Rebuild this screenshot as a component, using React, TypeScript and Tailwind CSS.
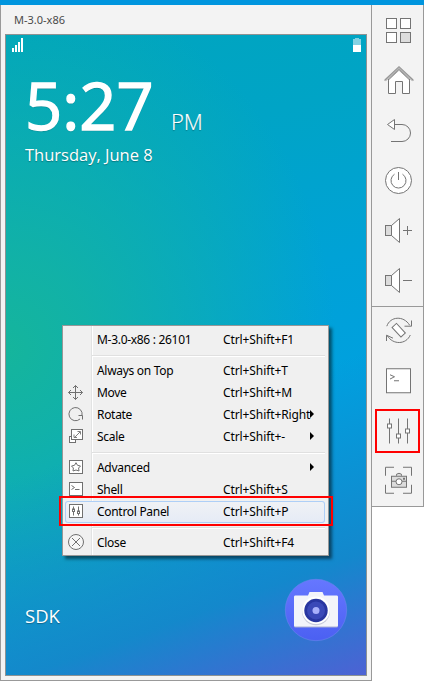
import type { ReactNode } from "react";

type MenuRow = {
  label: string;
  keys?: string;
  icon?: ReactNode;
  arrow?: boolean;
  active?: boolean;
};

function Tool({ box, children }: { box: string; children: ReactNode }) {
  return (
    <svg viewBox={box} className="w-full min-h-0 flex-1" fill="none" stroke="#747474">
      {children}
    </svg>
  );
}

function Speaker() {
  return (
    <>
      <rect x="385.5" y="225.5" width="6" height="10" fill="#dcdcdc" />
      <path d="M391.5 225.5L399.5 218.5V242.5L391.5 235.5Z" fill="#fff" />
    </>
  );
}

function Toolbar() {
  return (
    <aside className="flex h-[502px] w-[53px] flex-col border-x border-b border-[#999] bg-[#f3f3f3]">
      <div className="flex h-[301px] flex-col border-b border-transparent">
        <Tool box="372 5 51 50">
          <rect x="386.5" y="18.5" width="10" height="10" fill="#fff" />
          <rect x="400.5" y="18.5" width="10" height="10" fill="#fff" />
          <rect x="386.5" y="32.5" width="10" height="10" fill="#fff" />
          <rect x="400.5" y="32.5" width="10" height="10" fill="#dcdcdc" />
        </Tool>
        <Tool box="372 55 51 50">
          <path d="M388.5 79V93.5H395.5V81.5H402.5V93.5H409.5V79L399 69Z" fill="#fff" />
          <path d="M385 80.3L399 67.7L413 80.3" stroke="#b4b4b4" strokeWidth="2.4" />
          <path d="M384.5 80.5L399 66.7L413.5 80.5M388 80.5L399 70.2L410 80.5" stroke="#8a8a8a" strokeWidth=".8" />
        </Tool>
        <Tool box="372 105 51 50">
          <path d="M394.5 124.5H402A8.5 8.5 0 0 1 402 141.5H391" />
          <path d="M387.5 124.5L394.5 119.5V129.5Z" fill="#fff" />
        </Tool>
        <Tool box="372 155 51 50">
          <circle cx="398.5" cy="180.5" r="13" fill="#fff" />
          <path d="M394.5 174.2A7.5 7.5 0 1 0 402.5 174.2M398.5 172V180" />
        </Tool>
        <Tool box="372 205 51 50">
          <Speaker />
          <path d="M403 230.5H412M407.5 226V235" />
        </Tool>
        <Tool box="372 255 51 50">
          <g transform="translate(0 50)">
            <Speaker />
            <path d="M403 230.5H412" />
          </g>
        </Tool>
      </div>
      <div className="flex h-[200px] flex-col border-t border-[#999]">
        <Tool box="372 307 51 49.75">
          <rect x="-3" y="-6.5" width="6" height="13" fill="#fff" transform="translate(398.7 330.2) rotate(-43)" />
          <path d="M386.8 326.2C390 316.5 403.5 315 409.7 325.3M411.5 320.5V326.2H404.5M410.3 335C406 344.8 393 345 387.3 335.7M386.5 341V335.2L393 338.2" />
        </Tool>
        <Tool box="372 356.75 51 49.75">
          <rect x="386.5" y="368.5" width="24" height="24" fill="#fff" />
          <path d="M390 374.5L394.5 376.5L390 378.8M394 380.5H399" />
        </Tool>
        <Tool box="372 406.5 51 49.75">
          <path d="M389.5 418V443M398.5 418V443M407.5 418V443" />
          <g fill="#fff">
            <rect x="387.5" y="423.5" width="4" height="4" />
            <rect x="396.5" y="433.5" width="4" height="4" />
            <rect x="405.5" y="428.5" width="4" height="4" />
          </g>
        </Tool>
        <Tool box="372 456.25 51 49.75">
          <path d="M385.5 476V467.5H394M403 467.5H411.5V476M411.5 485V493.5H403M394 493.5H385.5V485" />
          <path d="M396.5 476V474.5Q399 472.5 401.5 474.5V476" fill="#dcdcdc" />
          <rect x="391.5" y="476.5" width="15" height="11" fill="#dcdcdc" />
          <path d="M391.5 481.5H406.5" />
          <circle cx="399" cy="482" r="3" fill="#fff" />
          <rect x="403" y="478" width="2" height="2" fill="#747474" stroke="none" />
        </Tool>
      </div>
    </aside>
  );
}

const moveIcon = (
  <svg viewBox="65 382 26 22" className="h-[22px] w-[26px]" fill="none" stroke="#707070">
    <path d="M68.5 392.5H82.5M75.5 385.5V399.5M71 390L68.5 392.5L71 395M80 390L82.5 392.5L80 395M73 388L75.5 385.5L78 388M73 397L75.5 399.5L78 397" />
  </svg>
);
const rotateIcon = (
  <svg viewBox="65 404 26 22" className="h-[22px] w-[26px]" fill="none" stroke="#707070">
    <path d="M80 419A6.6 6.6 0 1 1 82 415.5M82.5 419.5V415.5H78.5" />
  </svg>
);
const scaleIcon = (
  <svg viewBox="65 426 26 22" className="h-[22px] w-[26px]" fill="#fff" stroke="#707070">
    <rect x="69.5" y="436.5" width="6" height="6" />
    <rect x="71.5" y="429.5" width="11" height="10" />
    <path d="M74.5 437.5L80 432M77.5 431.5H80.5V434.5M74 434.5V437.5H77" fill="none" strokeWidth=".9" />
  </svg>
);
const advancedIcon = (
  <svg viewBox="65 457 26 22" className="h-[22px] w-[26px]" fill="#fff" stroke="#707070">
    <rect x="69.5" y="460.5" width="13" height="13" />
    <path d="M76 462.7L77.5 465.3L80.5 466L78.6 468L79 471L76 470L73 471L73.4 468L71.5 466L74.5 465.3Z" />
  </svg>
);
const shellIcon = (
  <svg viewBox="65 479 26 22" className="h-[22px] w-[26px]" fill="#fff" stroke="#707070">
    <rect x="69.5" y="482.5" width="13" height="13" />
    <path d="M71.5 485.5L74.5 487.5L71.5 489.5M75 489.5H79.5" fill="none" />
  </svg>
);
const panelIcon = (
  <svg viewBox="65 501 26 22" className="h-[22px] w-[26px]" fill="#fff" stroke="#707070">
    <rect x="69.5" y="504.5" width="13" height="13" />
    <path d="M73.5 506.5V515.5M78.5 506.5V515.5" />
    <rect x="72.5" y="509" width="2" height="2.5" />
    <rect x="77.5" y="511" width="2" height="2.5" />
  </svg>
);
const closeIcon = (
  <svg viewBox="65 532 26 22" className="h-[22px] w-[26px]" fill="none" stroke="#707070">
    <circle cx="76" cy="542" r="7.5" fill="#f6f6f6" />
    <path d="M72 538L80 546M80 538L72 546" />
  </svg>
);

const groups: MenuRow[][] = [
  [{ label: "M-3.0-x86 : 26101", keys: "Ctrl+Shift+F1" }],
  [
    { label: "Always on Top", keys: "Ctrl+Shift+T" },
    { label: "Move", keys: "Ctrl+Shift+M", icon: moveIcon },
    { label: "Rotate", keys: "Ctrl+Shift+Right", icon: rotateIcon, arrow: true },
    { label: "Scale", keys: "Ctrl+Shift+-", icon: scaleIcon, arrow: true },
  ],
  [
    { label: "Advanced", icon: advancedIcon, arrow: true },
    { label: "Shell", keys: "Ctrl+Shift+S", icon: shellIcon },
    { label: "Control Panel", keys: "Ctrl+Shift+P", icon: panelIcon, active: true },
  ],
  [{ label: "Close", keys: "Ctrl+Shift+F4", icon: closeIcon }],
];

function Row({ row }: { row: MenuRow }) {
  return (
    <div
      className={`flex h-[22px] items-center whitespace-nowrap ${
        row.active
          ? "rounded-[3px] bg-linear-to-b from-[#f0f2f5] to-[#e5ebf6] shadow-[inset_0_0_0_1px_#aecff7]"
          : ""
      }`}
    >
      <div className="w-8 shrink-0">{row.icon}</div>
      <div className="w-[126px] shrink-0 tracking-[-0.3px]">{row.label}</div>
      <div className="w-[87px] shrink-0 tracking-[-0.1px]">{row.keys}</div>
      {row.arrow && (
        <svg viewBox="0 0 4 8" className="mb-[3px] h-2 w-1 shrink-0">
          <path d="M0 0L4 4L0 8Z" />
        </svg>
      )}
    </div>
  );
}

function ContextMenu() {
  return (
    <div className="absolute left-[62px] top-[325px] h-[231px] w-[267px] border border-[#979797] bg-[#f0f0f0] bg-[linear-gradient(90deg,transparent_28px,#e2e3e3_28px,#e2e3e3_29px,#fff_29px,#fff_30px,transparent_30px)] py-[3px] pl-[2px] pr-[3px] font-['Noto_Sans','Open_Sans',sans-serif] text-[12px] leading-4 text-black shadow-[3px_3px_3px_rgba(0,0,0,0.5)]">
      {groups.map((g, i) => (
        <div key={i}>
          {i > 0 && (
            <div className="flex h-[9px] items-center pl-[27px]">
              <div className="h-[2px] w-full border-b border-white bg-[#e0e0e0]" />
            </div>
          )}
          {g.map((r) => (
            <Row key={r.label} row={r} />
          ))}
        </div>
      ))}
    </div>
  );
}

function PhoneScreen() {
  return (
    <div className="flex h-[642px] w-[362px] flex-col border border-[#8d9293] bg-[linear-gradient(160deg,transparent_58%,rgba(24,130,200,0.8)_84%,#4d62d4_100%),radial-gradient(ellipse_330px_370px_at_0%_49%,#15b59c_0%,rgba(20,180,160,0.85)_25%,transparent_100%),linear-gradient(165deg,#00a5be_0%,#00a4c6_20%,#00a2d6_42%,#00a0df_60%)] font-['Open_Sans','Noto_Sans',sans-serif] text-white">
      <div className="flex h-[22px] justify-between px-[5px] pt-[3px]">
        <svg viewBox="0 0 12 14" className="ml-[1px] h-[14px] w-3" fill="#fff">
          <path d="M0 10H2V14H0ZM3 7H5V14H3ZM6 4H8V14H6ZM9 0H11V14H9Z" />
        </svg>
        <svg viewBox="0 0 8 14" className="h-[14px] w-2">
          <path d="M0 1H2V0H6V1H8V7H0Z" fill="#84d2e3" />
          <path d="M0 7H8V14H0Z" fill="#fff" />
        </svg>
      </div>
      <div className="flex h-[80px] items-baseline pl-[19px] pt-[13px] [text-shadow:0_1px_1px_rgba(0,0,0,0.3)]">
        <span className="w-[146px] text-[65px] leading-[70px] [-webkit-text-stroke:1.4px_white]">5:27</span>
        <span className="text-[22px] font-light leading-none [-webkit-text-stroke:0.2px_white]">PM</span>
      </div>
      <div className="mt-[6px] pl-[19px] text-[16.5px] leading-6 [text-shadow:0_1px_1px_rgba(0,0,0,0.3)]">
        Thursday, June 8
      </div>
      <div className="mt-auto flex h-[97px] items-start justify-between pl-[19px] pr-[18px]">
        <span className="mt-[26px] text-[18.5px] leading-6 [text-shadow:0_1px_1px_rgba(0,0,0,0.3)]">SDK</span>
        <svg viewBox="0 0 64 64" className="h-16 w-16">
          <defs>
            <linearGradient id="disc" x2="0" y2="1">
              <stop stopColor="#6677ff" />
              <stop offset="1" stopColor="#4b60f2" />
            </linearGradient>
          </defs>
          <circle cx="32" cy="32" r="30.7" fill="url(#disc)" stroke="#6b83ee" strokeWidth=".6" />
          <rect x="10" y="18" width="44" height="31.5" rx="1.5" fill="#a9aed5" />
          <path d="M24 17.5L25.5 14H38.5L40 17.5H53Q54 17.5 54 19V47.5Q54 48.5 53 48.5H11Q10 48.5 10 47.5V19Q10 17.5 11 17.5Z" fill="#f3f4fa" />
          <circle cx="32" cy="33.3" r="14" fill="#c8cbdc" />
          <circle cx="32" cy="32.3" r="13.8" fill="#fff" />
          <circle cx="32" cy="32.5" r="11.7" fill="#2936a0" />
          <circle cx="32" cy="32.5" r="9" fill="#3b49b8" />
          <circle cx="32" cy="32.5" r="3.5" fill="#a9b0fb" />
        </svg>
      </div>
    </div>
  );
}

export default function App() {
  return (
    <div className="relative h-[681px] w-[424px] overflow-hidden bg-white">
      <div className="h-[5px] bg-[#0095de]" />
      <div className="flex items-start">
        <main className="h-[676px] w-[371px] border-b border-l border-[#999] bg-[#f3f3f3] pl-1">
          <div className="h-[29px] pl-[9px] pt-[7px] font-['Noto_Sans',sans-serif] text-[11px] leading-4 text-[#4a4a4a]">
            M-3.0-x86
          </div>
          <PhoneScreen />
        </main>
        <div className="h-[676px] shadow-[inset_1px_0_0_#999]">
          <Toolbar />
        </div>
      </div>
      <ContextMenu />
      <div className="absolute left-[59px] top-[496px] h-[30px] w-[274px] border-2 border-[#f00]" />
      <div className="absolute left-[375px] top-[409px] h-11 w-[45px] border-2 border-[#f00]" />
    </div>
  );
}
